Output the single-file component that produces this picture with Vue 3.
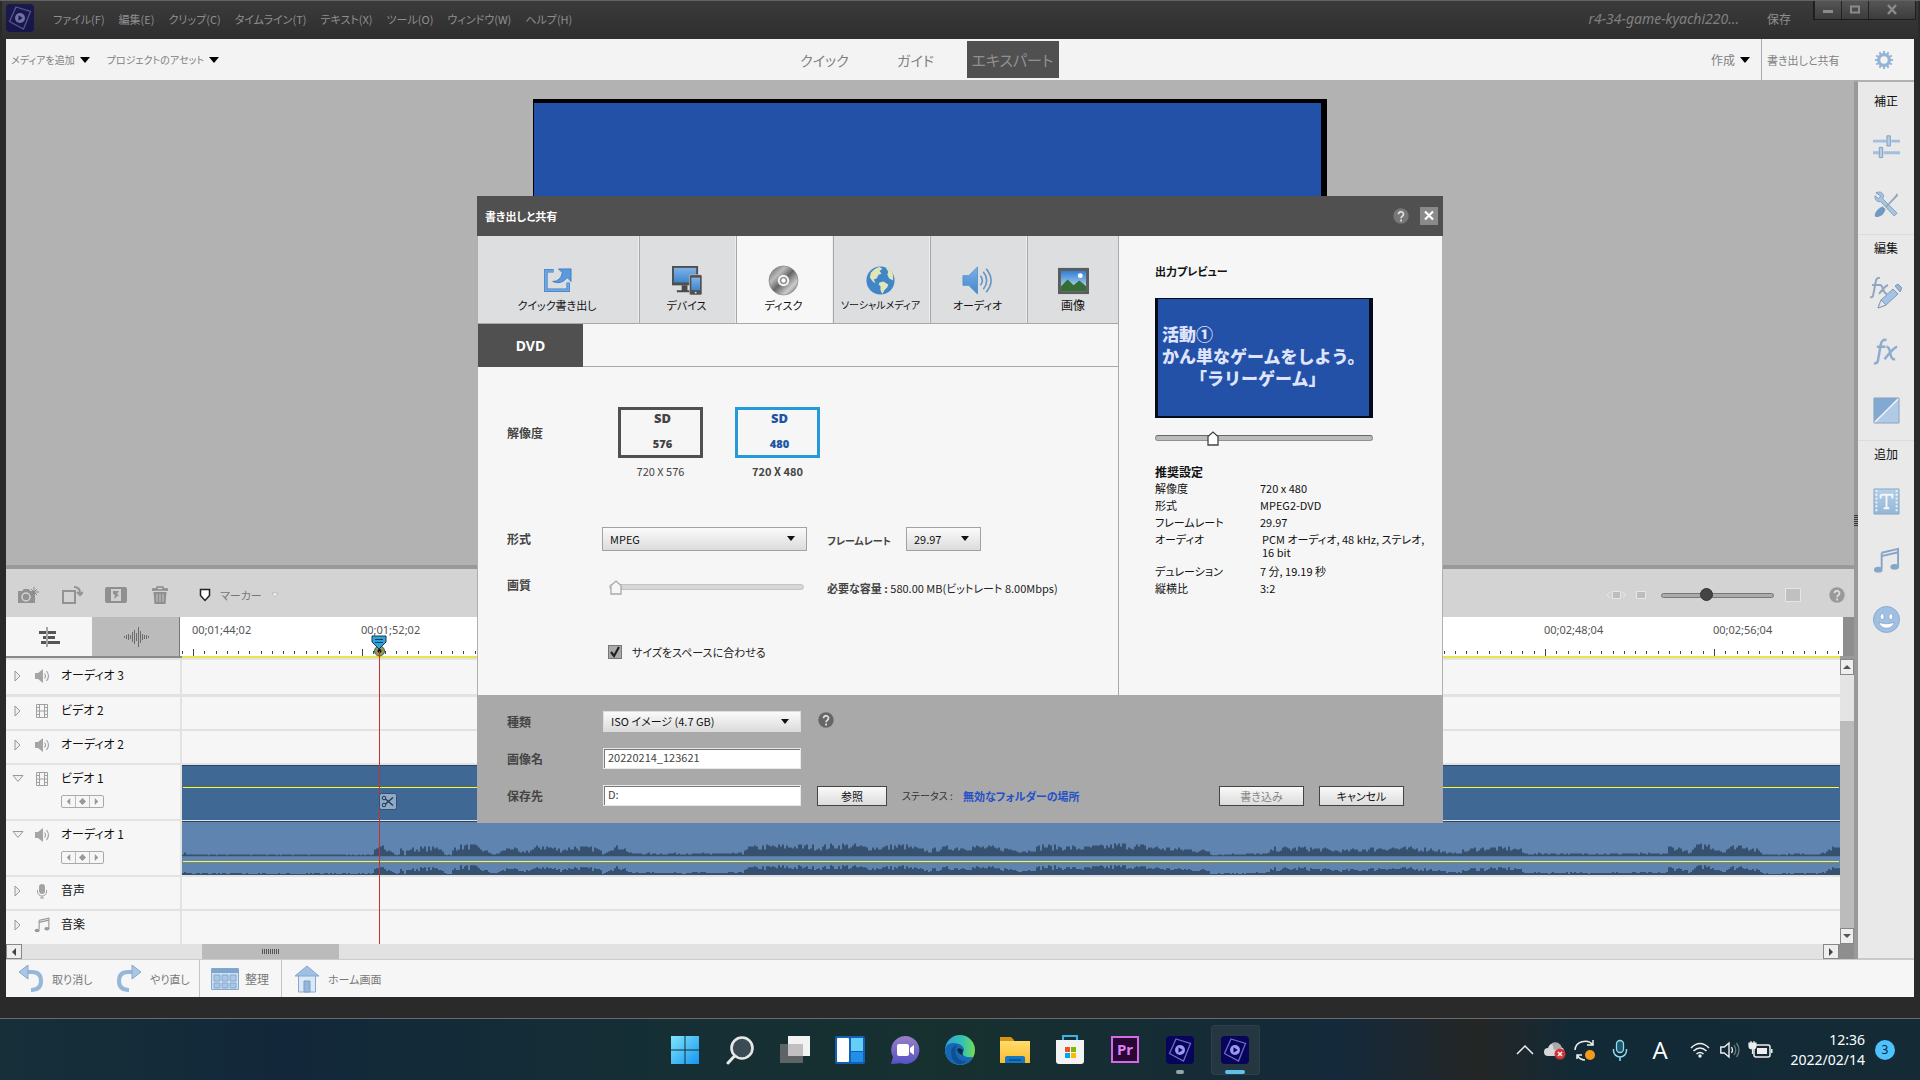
<script setup>
import { ref } from 'vue'

const menus = ['ファイル(F)', '編集(E)', 'クリップ(C)', 'タイムライン(T)', 'テキスト(X)', 'ツール(O)', 'ウィンドウ(W)', 'ヘルプ(H)']

const tabs = [
  { id: 'quick', label: 'クイック書き出し' },
  { id: 'device', label: 'デバイス' },
  { id: 'disc', label: 'ディスク' },
  { id: 'social', label: 'ソーシャルメディア' },
  { id: 'audio', label: 'オーディオ' },
  { id: 'image', label: '画像' }
]
const activeTab = ref('disc')

const format = ref('MPEG')
const rate = ref('29.97')
const kind = ref('ISO イメージ (4.7 GB)')
const quality = ref(0)
const position = ref(25)
const zoom = ref(39)
const fit = ref(true)
const imageName = ref('20220214_123621')
const folder = ref('D:')

const settings = [
  ['解像度', '720 x 480'],
  ['形式', 'MPEG2-DVD'],
  ['フレームレート', '29.97'],
  ['オーディオ', 'PCM オーディオ, 48 kHz, ステレオ, 16 bit'],
  ['デュレーション', '7 分, 19.19 秒'],
  ['縦横比', '3:2']
]

const timecodes = ['00;01;44;02', '00;01;52;02', '00;02;00;04', '00;02;08;04', '00;02;16;04', '00;02;24;04', '00;02;32;04', '00;02;40;04', '00;02;48;04', '00;02;56;04']

const tracks = [
  { name: 'オーディオ 3', icon: 'i-speaker', cls: 'first' },
  { name: 'ビデオ 2', icon: 'i-film' },
  { name: 'オーディオ 2', icon: 'i-speaker' },
  { name: 'ビデオ 1', icon: 'i-film', open: true, clip: 'video' },
  { name: 'オーディオ 1', icon: 'i-speaker', open: true, clip: 'audio' },
  { name: '音声', icon: 'i-mic' },
  { name: '音楽', icon: 'i-note', cls: 'last' }
]

const STEP = 169
const ticks = (() => {
  let d = ''
  for (let i = -1; i < 149; i++) {
    const x = Math.round(13 + (i * STEP) / 15)
    d += i % 15 === 0 ? `M${x} 32h1v7h-1z` : `M${x} 34h1v3h-1z`
  }
  return d
})()

// [x, loudness] pairs along the clip
const envelope = [
  [0, 4], [10, 2], [190, 2], [191, 6], [200, 10], [210, 7], [212, 2], [217, 2], [218, 9], [222, 2], [226, 8], [259, 9], [262, 2], [269, 1], [271, 10], [290, 11], [302, 6], [312, 2],
  [328, 10], [338, 4], [360, 11], [378, 7], [390, 10], [415, 8], [420, 3], [428, 9], [440, 10], [448, 3], [560, 3], [562, 9], [600, 11], [640, 10], [660, 12], [690, 9], [720, 11],
  [745, 6], [760, 9], [800, 10], [845, 6], [860, 11], [900, 9], [940, 12], [990, 8], [1026, 6], [1028, 2], [1085, 3], [1090, 8], [1120, 9], [1160, 6], [1200, 9], [1230, 8], [1248, 8],
  [1270, 3], [1290, 8], [1310, 9], [1336, 8], [1342, 3], [1484, 3], [1486, 10], [1500, 8], [1508, 3], [1512, 10], [1525, 12], [1540, 5], [1545, 9], [1560, 12], [1575, 6], [1582, 2],
  [1640, 3], [1648, 9], [1656, 8], [1658, 4]
]
const loudness = x => {
  let i = 0
  while (i < envelope.length - 2 && envelope[i + 1][0] < x) i++
  const [x0, y0] = envelope[i]
  const [x1, y1] = envelope[i + 1]
  return y0 + ((y1 - y0) * (x - x0)) / (x1 - x0)
}
const wave = (base, gain) => {
  let seed = 7
  let d = `M0 ${base}`
  for (let x = 0; x < 1658; x += 2) {
    seed = (seed * 16807) % 2147483647
    const n = 0.6 + 0.6 * (seed / 2147483647)
    d += `V${base - Math.max(1, Math.round(loudness(x) * n * gain))}h2`
  }
  return d + `V${base}z`
}
const wavePath = wave(35, 1) + wave(54, 0.8)

const gearTeeth = Array.from({ length: 12 }, (_, i) => i * 30)
</script>

<template>
  <div class="desktop">
    <svg class="defs" aria-hidden="true">
      <defs>
        <linearGradient id="gBlue" x1="0" y1="0" x2="0" y2="1"><stop offset="0" stop-color="#7fb2e6" /><stop offset="1" stop-color="#3f86cf" /></linearGradient>
        <linearGradient id="gPale" x1="0" y1="0" x2="0" y2="1"><stop offset="0" stop-color="#b4cfe9" /><stop offset="1" stop-color="#93b6d8" /></linearGradient>
        <linearGradient id="gDisc" x1="0" y1="0" x2="1" y2="1"><stop offset="0" stop-color="#555" /><stop offset=".3" stop-color="#bbb" /><stop offset=".5" stop-color="#666" /><stop offset=".75" stop-color="#ccc" /><stop offset="1" stop-color="#555" /></linearGradient>
        <linearGradient id="gSky" x1="0" y1="0" x2="0" y2="1"><stop offset="0" stop-color="#2f7fd0" /><stop offset="1" stop-color="#cfe6f6" /></linearGradient>
        <linearGradient id="gWin" x1="0" y1="0" x2="1" y2="1"><stop offset="0" stop-color="#7ee6fb" /><stop offset="1" stop-color="#1795f0" /></linearGradient>
        <linearGradient id="gChat" x1="0" y1="0" x2="0" y2="1"><stop offset="0" stop-color="#9a7fc6" /><stop offset="1" stop-color="#5453c4" /></linearGradient>
        <linearGradient id="gEdge" x1="0" y1="0" x2="1" y2="0"><stop offset="0" stop-color="#2da3dd" /><stop offset=".6" stop-color="#35c3b0" /><stop offset="1" stop-color="#74dc55" /></linearGradient>
        <linearGradient id="gFold" x1="0" y1="0" x2="0" y2="1"><stop offset="0" stop-color="#ffdb6e" /><stop offset="1" stop-color="#fbbd2c" /></linearGradient>
        <symbol id="i-pe" viewBox="0 0 28 28">
          <rect width="28" height="28" rx="4" fill="#06055a" />
          <path d="M10 3 24.500 7.500 17.500 25 3.500 17.500z" fill="none" stroke="#6f6ac8" stroke-width="1.300" />
          <circle cx="14" cy="14" r="5" fill="#9c99f5" />
          <path d="M12.500 11.200v5.600l4.200-2.800z" fill="#06055a" />
        </symbol>
        <symbol id="i-help" viewBox="0 0 16 16">
          <circle cx="8" cy="8" r="7.700" fill="currentColor" />
          <path d="M5.500 6.200a2.500 2.400 0 1 1 3.800 2C8.300 8.800 8.100 9.200 8.100 10.200M8.100 11.600v1.800" fill="none" stroke="#ddd" stroke-width="1.800" />
        </symbol>
        <symbol id="i-speaker" viewBox="0 0 16 16">
          <path d="M1 5h3l5-4v14l-5-4H1z" fill="#a5a5a5" />
          <path d="M10.500 5.500q2 2.500 0 5M12.500 3q4 5 0 10" fill="none" stroke="#a5a5a5" stroke-width="1.200" />
        </symbol>
        <symbol id="i-film" viewBox="0 0 16 16">
          <path d="M2.500 1.500h11v13h-11zM5.500 1.500v13M10.500 1.500v13M5.500 8h5M2.500 4.500h3M2.500 8h3M2.500 11.500h3M10.500 4.500h3M10.500 8h3M10.500 11.500h3" fill="none" stroke="#a0a0a0" />
        </symbol>
        <symbol id="i-mic" viewBox="0 0 16 16">
          <rect x="5" y="1" width="6" height="10" rx="3" fill="#a3a3a3" />
          <path d="M3.500 7v2a4.500 4 0 0 0 9 0V7M8 13v2M6 15h4" fill="none" stroke="#a3a3a3" />
        </symbol>
        <symbol id="i-note" viewBox="0 0 28 28">
          <path d="M9 6 26 2v19M9 22V6M9 9.500 26 5.500" fill="none" stroke="currentColor" stroke-width="2" />
          <ellipse cx="5.500" cy="23.500" rx="4.500" ry="3" fill="currentColor" />
          <ellipse cx="22.500" cy="20.500" rx="4.500" ry="3" fill="currentColor" />
        </symbol>
      </defs>
    </svg>

    <div class="app">
      <header class="titlebar">
        <svg class="logo" viewBox="0 0 28 28"><use href="#i-pe" /></svg>
        <nav class="menus"><button v-for="m in menus" :key="m">{{ m }}</button></nav>
        <i class="filename">r4-34-game-kyachi220...</i>
        <button class="save">保存</button>
        <div class="winbtns">
          <button aria-label="最小化"><svg viewBox="0 0 12 12"><path d="M1 6h10v3H1z" fill="#8a8a8a" /></svg></button>
          <button aria-label="最大化"><svg viewBox="0 0 12 12"><path d="M2 2.500h8v6H2z" fill="none" stroke="#8a8a8a" stroke-width="2" /></svg></button>
          <button class="x" aria-label="閉じる"><svg viewBox="0 0 12 12"><path d="M2 1l8 9M10 1l-8 9" stroke="#8a8a8a" stroke-width="2.400" /></svg></button>
        </div>
      </header>

      <div class="toolbar">
        <div class="side">
          <button>メディアを追加<b class="arrow"></b></button>
          <button>プロジェクトのアセット<b class="arrow"></b></button>
        </div>
        <div class="modes">
          <button>クイック</button><button>ガイド</button><button class="on">エキスパート</button>
        </div>
        <div class="side right">
          <button class="create">作成<b class="arrow"></b></button>
          <button class="share">書き出しと共有</button>
          <button class="gear" aria-label="設定">
            <svg viewBox="0 0 20 20"><rect v-for="a in gearTeeth" :key="a" x="9" y="1" width="2" height="4" fill="#94b3d6" :transform="`rotate(${a} 10 10)`" /><circle cx="10" cy="10" r="5.300" fill="none" stroke="#94b3d6" stroke-width="3.200" /></svg>
          </button>
        </div>
      </div>

      <div class="workspace">
        <main class="main">
          <section class="monitor"><div class="screen"></div></section>

          <section class="timeline">
            <div class="tlbar">
              <button aria-label="フレームを保存"><svg viewBox="0 0 22 18"><path d="M1 5h4l2-2h5l1 2h5v12H1z" fill="#929292" /><circle cx="9" cy="11" r="4" fill="none" stroke="#d3d3d3" stroke-width="1.500" /><path d="M17 1v10M12 6h10M14 3l6 6M20 3l-6 6" stroke="#8a8a8a" /></svg></button>
              <button aria-label="回転"><svg viewBox="0 0 22 18"><path d="M2 5h12v12H2z" fill="none" stroke="#929292" stroke-width="2" /><path d="M13 1q6 0 6 6M16 6l3 3 3-3" fill="none" stroke="#929292" stroke-width="2" /></svg></button>
              <button aria-label="モーション"><svg viewBox="0 0 22 18"><rect y="1" width="22" height="16" rx="2" fill="#8f8f8f" /><path d="M6 3h10v12H6z" fill="#d0d0d0" /><path d="M8 5h6l-2 3 2 1-5 4 1-4-2-1z" fill="#929292" /></svg></button>
              <button aria-label="削除"><svg viewBox="0 0 22 18"><path d="M3 3h5V1h6v2h5M3 4h16" fill="none" stroke="#8b8b8b" stroke-width="1.500" /><path d="M4.500 6h13l-1 12h-11z" fill="#8f8f8f" /><path d="M8 8v8M11 8v8M14 8v8" stroke="#c5c5c5" /></svg></button>
              <button class="marker"><svg viewBox="0 0 12 14"><path d="M1.500 1.500h9v6L6 12.500 1.500 7.500z" fill="#fff" stroke="#222" stroke-width="1.500" /></svg>マーカー<svg class="chev" viewBox="0 0 8 8"><path d="M1 2h6L4 6z" fill="#f4f4f4" stroke="#aaa" stroke-width=".6" /></svg></button>
              <span class="grow"></span>
              <svg class="z1" viewBox="0 0 20 10"><path d="M6.500 1.500h8v7h-8z" fill="#bdbdbd" stroke="#e6e6e6" /><path d="M4 2 1 5l3 3M16.500 2l3 3-3 3" fill="none" stroke="#e6e6e6" /></svg>
              <svg class="z2" viewBox="0 0 10 10"><path d="M.5 1.500h9v7h-9z" fill="#bdbdbd" stroke="#e6e6e6" /></svg>
              <input v-model="zoom" class="zoom" type="range" aria-label="ズーム">
              <svg class="z3" viewBox="0 0 16 14"><path d="M.5.500h15v13H.5z" fill="#c0c0c0" stroke="#e6e6e6" /></svg>
              <button class="helpbtn" aria-label="ヘルプ"><svg viewBox="0 0 16 16"><use href="#i-help" /></svg></button>
            </div>

            <div class="rulerrow">
              <div class="views">
                <button class="on" aria-label="タイムライン"><svg viewBox="0 0 22 20"><path d="M1 4h7v3H1zM10 4h8v3h-8zM5 9h3v3H5zM10 9h7v3h-7zM3 14h5v3H3zM10 14h12v3H10z" fill="#555" /><path d="M9 0v20" stroke="#555" /></svg></button>
                <button aria-label="オーディオ"><svg viewBox="0 0 26 20"><path d="M1.500 9v2M3.500 8v4M5.500 7v6M7.500 8v4M9.500 5v10M11.500 3v14M13.500 6v8M15.500 0v20M17.500 4v12M19.500 7v6M21.500 8v4M23.500 8v4M25.500 9v2" stroke="#6b6b6b" /></svg></button>
              </div>
              <div class="ruler">
                <span v-for="t in timecodes" :key="t">{{ t }}</span>
                <svg class="ticks"><path :d="ticks" fill="#444" /></svg>
              </div>
              <i class="corner"></i>
            </div>

            <div class="tracks">
              <div class="rows">
                <div v-for="t in tracks" :key="t.name" class="track" :class="[t.cls, { open: t.open }]">
                  <div class="thead">
                    <svg class="tri" viewBox="0 0 12 12"><path :d="t.open ? 'M1 2.500h10l-5 6z' : 'M3 1v10l5-5z'" fill="#eee" stroke="#999" /></svg>
                    <svg class="ticon" viewBox="0 0 16 16"><use :href="'#' + t.icon" /></svg>
                    <div class="tname">
                      <span>{{ t.name }}</span>
                      <span v-if="t.open" class="keys">
                        <button aria-label="前へ"><svg viewBox="0 0 8 8"><path d="M6 0v8L2 4z" fill="#999" /></svg></button>
                        <button aria-label="追加"><svg viewBox="0 0 8 8"><path d="M4 0l4 4-4 4-4-4z" fill="#999" /></svg></button>
                        <button aria-label="次へ"><svg viewBox="0 0 8 8"><path d="M2 0v8l4-4z" fill="#999" /></svg></button>
                      </span>
                    </div>
                  </div>
                  <div class="lane" :class="t.clip">
                    <svg v-if="t.clip === 'audio'" class="wave" viewBox="0 0 1658 54" preserveAspectRatio="none"><path :d="wavePath" fill="#36506f" /></svg>
                    <i v-if="t.clip" class="level"></i>
                  </div>
                </div>
                <div class="playhead">
                  <svg viewBox="0 0 16 22">
                    <circle cx="8.500" cy="16" r="5" fill="#8d9c5c" stroke="#4a5a3a" /><circle cx="8.500" cy="16" r="2" fill="#111" />
                    <path d="M1 1h14v6L8 14 1 7z" fill="#2ea3dc" stroke="#173a52" /><path d="M4 4.500h8M4 7.500h8" stroke="#173a52" />
                  </svg>
                  <i></i>
                </div>
                <svg class="scissors" viewBox="0 0 18 17"><rect x=".5" y=".5" width="17" height="16" rx="2" fill="#8fa9c8" stroke="#36506f" /><circle cx="5" cy="5" r="1.800" fill="none" stroke="#22364f" /><circle cx="5" cy="12" r="1.800" fill="none" stroke="#22364f" /><path d="M6.500 6 14 12.500M6.500 11 14 4.500" stroke="#22364f" stroke-width="1.300" /></svg>
              </div>
              <div class="vscroll">
                <button aria-label="上へ"><svg viewBox="0 0 8 8"><path d="M0 6h8L4 2z" fill="#555" /></svg></button>
                <i></i>
                <button aria-label="下へ"><svg viewBox="0 0 8 8"><path d="M0 2h8L4 6z" fill="#555" /></svg></button>
              </div>
            </div>
            <div class="hscroll">
              <button aria-label="左へ"><svg viewBox="0 0 8 8"><path d="M6 0v8L2 4z" fill="#444" /></svg></button>
              <i></i>
              <button class="end" aria-label="右へ"><svg viewBox="0 0 8 8"><path d="M2 0v8l4-4z" fill="#444" /></svg></button>
            </div>
          </section>
        </main>
        <div class="divider"><i></i></div>

        <aside class="sidebar">
          <section>
            <h2>補正</h2>
            <button aria-label="調整"><svg viewBox="0 0 28 28"><path d="M0 8h14v3H0zM19 8h9v3h-9zM0 20h6v3H0zM11 20h17v3H11z" fill="#a3bfdd" /><path d="M14.500 4h3.500v10.500h-3.500zM6.500 16h3.500v10.500H6.500z" fill="#b4cfe9" stroke="#7f9dc0" /></svg></button>
            <button aria-label="ツール"><svg viewBox="0 0 28 28"><path d="M3 2q6-3 8 3l-1 3 15 15-3 3L8 11q-6 1-6-6l4 3 2-3z" fill="#a7c4e1" stroke="#7f9dc0" /><path d="M25 2l1 3-12 12-1-1L23 5z" fill="#93a6bb" /><path d="M10 16l3 3q-2 7-8 8-4 0-3-3 2-6 8-8z" fill="#7099c4" /></svg></button>
          </section>
          <section>
            <h2>編集</h2>
            <button aria-label="エフェクトの編集"><svg class="big" viewBox="0 0 32 32"><path d="M10 1q-4-1-4.500 5L3 19q-1 2-3 1M2 8h8M10 8q2 0 3 4t4 5M18 8q-3 1-9 9" fill="none" stroke="#93a6c0" stroke-width="2" /><path d="M23 12l5 5-12 11-8 3 3-8z" fill="#a3c3e4" stroke="#8499b0" /><path d="M8 31l3-8 5 5z" fill="#e6e6ea" stroke="#8499b0" /><path d="M25 9l3-2 4 4-2 4z" fill="#92b6dc" stroke="#8499b0" /></svg></button>
            <button aria-label="エフェクト"><svg viewBox="0 0 28 28"><path d="M14 2q-5-1-6 5L5 24q-1 3-4 2M4 9h9M14 9q3 0 4 7t5 6M25 9q-4 1-13 13" fill="none" stroke="#8facd0" stroke-width="2.600" /></svg></button>
            <button aria-label="トランジション"><svg viewBox="0 0 28 28"><path d="M1 1h26L1 27z" fill="#82a9d2" /><path d="M27 1v26H1z" fill="#b0cbe8" /><path d="M1 27 27 1" stroke="#f4f4f4" stroke-width="1.500" /><path d="M1 1h26v26H1z" fill="none" stroke="#8aa2bd" /></svg></button>
          </section>
          <section>
            <h2>追加</h2>
            <button aria-label="タイトル"><svg viewBox="0 0 28 28"><path d="M1 1h26v26H1z" fill="url(#gPale)" stroke="#8aa8c8" /><path d="M8 7h12v4M8 11V7M14 7v14M11 21h6" fill="none" stroke="#f4f6f8" stroke-width="2" /><path d="M3.500 2v24M24.500 2v24" stroke="#f0f4f8" stroke-width="2" stroke-dasharray="2 2" /></svg></button>
            <button class="note" aria-label="音楽"><svg viewBox="0 0 28 28"><use href="#i-note" /></svg></button>
            <button aria-label="グラフィック"><svg viewBox="0 0 28 28"><circle cx="14" cy="14" r="13.500" fill="#9fc0e4" stroke="#8aa8cc" /><ellipse cx="9.500" cy="11" rx="2" ry="3" fill="#fff" stroke="#7f9dc0" stroke-width=".7" /><ellipse cx="18.500" cy="11" rx="2" ry="3" fill="#fff" stroke="#7f9dc0" stroke-width=".7" /><path d="M6 17q8 3 16 0-2 6-8 6t-8-6z" fill="#fff" stroke="#7f9dc0" stroke-width=".7" /></svg></button>
          </section>
        </aside>
      </div>

      <footer class="bottombar">
        <button class="undo"><svg viewBox="0 0 26 28"><path d="M9 7h5q9 0 9 9 0 9-10 9" fill="none" stroke="#97b7da" stroke-width="4" /><path d="M10 0v14L1 7z" fill="#a9c6e5" stroke="#8ba8c8" /></svg>取り消し</button>
        <button class="redo"><svg viewBox="0 0 26 28"><path d="M17 7h-5q-9 0-9 9 0 9 10 9" fill="none" stroke="#97b7da" stroke-width="4" /><path d="M16 0v14l9-7z" fill="#a9c6e5" stroke="#8ba8c8" /></svg>やり直し</button>
        <button class="tidy"><svg class="cal" viewBox="0 0 28 24"><path d="M.5 1.500h27v21H.5z" fill="#cfe0f0" stroke="#86a8cc" /><path d="M1 2h26v4H1z" fill="#7da4cd" /><path d="M3 8h6v6H3zM11 8h6v6h-6zM19 8h6v6h-6zM3 16h6v5H3zM11 16h6v5h-6zM19 16h6v5h-6z" fill="#a9c8e8" stroke="#86a8cc" /></svg>整理</button>
        <button class="home"><svg viewBox="0 0 26 28"><path d="M4.500 10h17v17h-17z" fill="#dbe8f5" stroke="#86a8cc" /><path d="M13 1 25 11H1z" fill="#9fc0e4" stroke="#86a8cc" /><path d="M10 16h6v11h-6z" fill="#93b6dc" stroke="#7f9dc0" /></svg>ホーム画面</button>
      </footer>

      <section class="dialog" role="dialog" aria-label="書き出しと共有">
        <header>
          <h1>書き出しと共有</h1>
          <button class="dhelp" aria-label="ヘルプ"><svg viewBox="0 0 16 16"><use href="#i-help" /></svg></button>
          <button class="dclose" aria-label="閉じる"><svg viewBox="0 0 18 18"><path d="M5 4.500l8 8M13 4.500l-8 8" stroke="#fff" stroke-width="2.200" /></svg></button>
        </header>

        <div class="dbody">
          <div class="left">
            <nav class="tabs">
              <button v-for="t in tabs" :key="t.id" :class="[t.id, { on: t.id === activeTab }]" @click="activeTab = t.id">
                <svg v-if="t.id === 'quick'" viewBox="0 0 32 32"><path d="M12 6H4v20h23v-8" fill="none" stroke="#3f7fc4" stroke-width="3.600" /><path d="M12 6H4v20h23v-8" fill="none" stroke="#6ea9e4" stroke-width="2" /><path d="M17 4h13v13l-4-4q-6 8-15 4 8 0 10-9z" fill="#5b9ade" stroke="#3873b5" stroke-width=".8" /></svg>
                <svg v-else-if="t.id === 'device'" viewBox="0 0 32 32"><path d="M1 1h27v20H1z" fill="#505050" /><path d="M3 3h23v15H3z" fill="url(#gBlue)" /><path d="M11 21h6v5h3v2H6v-2h5z" fill="#4a4a4a" /><rect x="19" y="10" width="13" height="21" rx="1.500" fill="#505050" stroke="#ddd" stroke-width=".6" /><path d="M21 13h9v13h-9z" fill="url(#gBlue)" /><circle cx="25.500" cy="28.500" r="1" fill="#ddd" /></svg>
                <svg v-else-if="t.id === 'disc'" viewBox="0 0 32 32"><circle cx="16" cy="16" r="15" fill="url(#gDisc)" stroke="#777" stroke-width=".6" /><circle cx="16" cy="16" r="6" fill="#f0f0f0" /><circle cx="16" cy="16" r="3" fill="#fff" stroke="#888" stroke-width="1.400" /></svg>
                <svg v-else-if="t.id === 'social'" viewBox="0 0 32 32"><circle cx="16" cy="16" r="14.500" fill="#4184c8" /><path d="M6 8q4-5 9-6l3 2-3 2 2 3-3 1-2 4-3 1 2 4-3-2-3-4zM15 18l4-1 5 3-1 3-3 3-2 4-2-4 0-4-2-2zM21 2q6 2 8 8l0 6-4-2-2-4 1-3z" fill="#dfe7b8" /></svg>
                <svg v-else-if="t.id === 'audio'" viewBox="0 0 32 32"><path d="M1 11h6L16 2v28L7 21H1z" fill="url(#gBlue)" stroke="#4c8bcb" stroke-width=".8" /><path d="M19 11q4 5 0 10M22 7q7 9 0 18M25 4q10 12 0 24" fill="none" stroke="#6c96c2" stroke-width="1.700" /></svg>
                <svg v-else viewBox="0 0 32 32"><path d="M0 3h32v27H0z" fill="#5c5c5c" /><path d="M3 6h26v21H3z" fill="url(#gSky)" /><path d="M3 22l7-7 6 6 6-5 7 6v5H3z" fill="#356d35" /><circle cx="23" cy="11" r="2.500" fill="#fff" /></svg>
                <span>{{ t.label }}</span>
              </button>
            </nav>
            <div class="subtabs"><button>DVD</button></div>

            <div class="form">
              <div class="row res">
                <span class="lab">解像度</span>
                <div class="opts">
                  <button class="opt"><span class="box"><b>SD</b><b class="n">576</b></span><span class="cap">720 X 576</span></button>
                  <button class="opt sel"><span class="box"><b>SD</b><b class="n">480</b></span><span class="cap">720 X 480</span></button>
                </div>
              </div>
              <div class="row fmt">
                <label class="lab" for="format">形式</label>
                <select id="format" v-model="format" class="wide"><option>MPEG</option></select>
                <label class="lab2" for="rate">フレームレート</label>
                <select id="rate" v-model="rate" class="slim"><option>29.97</option></select>
              </div>
              <div class="row qual">
                <label class="lab" for="quality">画質</label>
                <input id="quality" v-model="quality" class="house faint" type="range">
                <span class="need"><b>必要な容量 :</b> 580.00 MB(ビットレート 8.00Mbps)</span>
              </div>
              <div class="row check">
                <input id="fit" v-model="fit" type="checkbox"><label for="fit">サイズをスペースに合わせる</label>
              </div>
            </div>
          </div>

          <div class="rightcol">
            <h2>出力プレビュー</h2>
            <div class="preview"><p>活動①</p><p>かん単なゲームをしよう。</p><p class="in">「ラリーゲーム」</p></div>
            <input v-model="position" class="house" type="range" aria-label="再生位置">
            <h2 class="rec">推奨設定</h2>
            <dl>
              <template v-for="s in settings" :key="s[0]">
                <dt>{{ s[0] }}</dt><dd :class="{ two: s[0] === 'オーディオ' }">{{ s[1] }}</dd>
              </template>
            </dl>
          </div>
        </div>

        <div class="dfoot">
          <div class="frow">
            <label class="lab" for="kind">種類</label>
            <select id="kind" v-model="kind"><option>ISO イメージ (4.7 GB)</option></select>
            <button class="fhelp" aria-label="ヘルプ"><svg viewBox="0 0 16 16"><use href="#i-help" /></svg></button>
          </div>
          <div class="frow">
            <label class="lab" for="iname">画像名</label>
            <input id="iname" v-model="imageName" type="text">
          </div>
          <div class="frow">
            <label class="lab" for="folder">保存先</label>
            <input id="folder" v-model="folder" type="text">
            <button class="btn browse">参照</button>
            <span class="status">ステータス :</span><b class="bad">無効なフォルダーの場所</b>
            <button class="btn burn" disabled>書き込み</button>
            <button class="btn">キャンセル</button>
          </div>
        </div>
      </section>
    </div>

    <footer class="taskbar">
      <span class="pad"></span>
      <nav class="dock">
        <button aria-label="スタート"><svg viewBox="0 0 30 30"><path d="M1 1h13.500v13.500H1zM15.500 1H29v13.500H15.500zM1 15.500h13.500V29H1zM15.500 15.500H29V29H15.500z" fill="url(#gWin)" /></svg></button>
        <button aria-label="検索"><svg viewBox="0 0 30 30"><circle cx="17" cy="13" r="10.500" fill="#3b4c55" stroke="#e8e8e8" stroke-width="2.600" /><path d="M9.500 21 3 28" stroke="#e8e8e8" stroke-width="3" stroke-linecap="round" /></svg></button>
        <button aria-label="タスクビュー"><svg viewBox="0 0 30 30"><path d="M8 1h22v20H8z" fill="#f2f2f2" /><path d="M0 9h23v19H0z" fill="#777" fill-opacity=".75" /><path d="M8 9h15v12H8z" fill="#c0c0c0" /></svg></button>
        <button aria-label="ウィジェット"><svg viewBox="0 0 30 30"><rect y="1" width="30" height="28" rx="2" fill="#1261b4" /><rect x="2" y="3" width="12" height="24" rx="1" fill="#fff" /><path d="M16 3h12v13H16z" fill="#66cdf8" /><path d="M16 17h12v10H16z" fill="#1f8fe8" /></svg></button>
        <button aria-label="チャット"><svg viewBox="0 0 30 30"><path d="M15 1a14 14 0 1 1-4 27.300L1 29l2-7A14 14 0 0 1 15 1z" fill="url(#gChat)" /><rect x="7" y="9" width="12" height="12" rx="2" fill="#fff" /><path d="M20 13l4-3v10l-4-3z" fill="#fff" /></svg></button>
        <button aria-label="Edge"><svg viewBox="0 0 30 30"><circle cx="15" cy="15" r="15" fill="url(#gEdge)" /><path d="M0 15Q1 8 8 8q9 0 11 6 0 3-2 4 1 5 11 4-4 8-13 8Q1 29 0 15z" fill="#1667b5" /><path d="M6 16q1-5 6-6-3 5-1 10 3 7 11 6-4 4-9 3Q6 26 6 16z" fill="#0f4f94" /><path d="M12 14q3-2 6 1-1 3 0 5h7l-7 0q-5-1-6-6z" fill="#132a35" /></svg></button>
        <button aria-label="エクスプローラー"><svg viewBox="0 0 30 30"><path d="M0 2h11l3 3v4H0z" fill="#d9940f" /><path d="M0 6h30v22H0z" fill="url(#gFold)" /><path d="M5 28v-5q0-2 2-2h16q2 0 2 2v5z" fill="#1477c4" /><path d="M9 25h12" stroke="#0b4d8a" stroke-width="1.500" /></svg></button>
        <button aria-label="ストア"><svg viewBox="0 0 30 30"><path d="M8 6V1h14v5" fill="none" stroke="#39b3ea" stroke-width="2" /><path d="M1 5h28v21q0 3-3 3H4q-3 0-3-3z" fill="#f3f3f3" /><path d="M10 12h5v5h-5z" fill="#f05022" /><path d="M16 12h5v5h-5z" fill="#7fba00" /><path d="M10 18h5v5h-5z" fill="#00a4ef" /><path d="M16 18h5v5h-5z" fill="#ffb900" /></svg></button>
        <button aria-label="Premiere Pro"><span class="pr">Pr</span></button>
        <button class="run" aria-label="Premiere Elements"><svg viewBox="0 0 28 28"><use href="#i-pe" /></svg></button>
        <button class="run cur" aria-label="Premiere Elements エディター"><svg viewBox="0 0 28 28"><use href="#i-pe" /></svg></button>
      </nav>
      <div class="tray">
        <svg class="w30" viewBox="0 0 30 24"><path d="M7 16l8-8 8 8" fill="none" stroke="#eee" stroke-width="1.500" /></svg>
        <svg class="w30" viewBox="0 0 30 24"><path d="M8 18a4 4 0 0 1 0-8 7 7 0 0 1 13-1 5 5 0 0 1 1 9z" fill="#d8d8d8" /><path d="M12 5a7 7 0 0 1 10 5l-8 2z" fill="#a9a9a9" /><circle cx="20" cy="16" r="5.500" fill="#d13438" /><path d="M18 14l4 4M22 14l-4 4" stroke="#fff" stroke-width="1.400" /></svg>
        <svg class="w30" viewBox="0 0 30 24"><path d="M5 12a10 9 0 0 1 18-5M23 2v5h-6M7 21v-4h5M7 17q3 5 8 5" fill="none" stroke="#eee" stroke-width="1.500" /><circle cx="20" cy="17" r="5" fill="#f59b1c" /></svg>
        <svg class="w40" viewBox="0 0 40 24"><rect x="16.500" y="2.500" width="7" height="12" rx="3.500" fill="#24566b" stroke="#8fdcf0" stroke-width="1.300" /><path d="M13.500 11v1.500a6.500 6.500 0 0 0 13 0V11M20 19v4" fill="none" stroke="#8fdcf0" stroke-width="1.500" /></svg>
        <span class="ime">A</span>
        <svg class="w40" viewBox="0 0 40 24"><path d="M11 10q9-9 18 0M13.500 13q6.500-6 13 0M16.500 16q3.500-3 7 0" fill="none" stroke="#eee" stroke-width="1.600" /><circle cx="20" cy="18" r="1.700" fill="#eee" /></svg>
        <svg class="w20" viewBox="0 0 20 24"><path d="M.8 9h3.500L9 5v14l-4.700-4H.8z" fill="none" stroke="#eee" stroke-width="1.400" /><path d="M11.500 9q2 3 0 6" fill="none" stroke="#eee" stroke-width="1.300" /><path d="M14 7q3.500 5 0 10M16.500 5q5 7 0 14" fill="none" stroke="#6b7a82" stroke-width="1.300" /></svg>
        <svg class="w40" viewBox="0 0 40 24"><rect x="14" y="7" width="16" height="12" rx="2" fill="none" stroke="#eee" stroke-width="1.500" /><path d="M17 10h10v6H17zM31 11h1.500v4H31z" fill="#eee" /><path d="M9 5h7v3q0 3-3.500 3T9 8zM11 3v3M14 3v3M12.500 11v5" fill="#eee" stroke="#eee" stroke-width="1.200" /></svg>
        <div class="clock"><span>12:36</span><span>2022/02/14</span></div>
        <span class="badge">3</span>
      </div>
    </footer>
  </div>
</template>

<style>
body { margin: 0; background: #152b36; }
</style>

<style scoped>
* { box-sizing: border-box; }
.desktop {
  min-height: 100vh; display: flex; flex-direction: column;
  font-family: "Noto Sans CJK JP", "Liberation Sans", sans-serif; font-size: 12px; line-height: 18px;
  font-feature-settings: "palt"; color: #111;
}
.defs { position: absolute; width: 0; height: 0; }
button { border: 0; background: none; padding: 0; margin: 0; font: inherit; font-feature-settings: inherit; color: inherit; white-space: nowrap; }
input, select { font: inherit; font-feature-settings: inherit; color: inherit; margin: 0; }
svg { display: block; flex: none; }
h1, h2, p, dl, dd { margin: 0; font-size: inherit; }

.app { position: relative; flex: 1; display: flex; flex-direction: column; background: #2a2a2a; padding: 0 6px 21px; border-top: 1px solid #636363; border-bottom: 1px solid #6a6a6a; }
.titlebar { height: 38px; flex: none; display: flex; align-items: center; background: linear-gradient(#3b3b3b, #2e2e2e); margin: 0 -4px; padding: 0 0 2px 4px; color: #8f8f8f; }
.logo { width: 28px; height: 28px; opacity: .6; margin-bottom: 2px; }
.menus { display: flex; gap: 14px; margin-left: 19px; font-size: 11px; }
.filename { margin-left: auto; font-family: "Noto Sans", "Noto Sans CJK JP", sans-serif; font-size: 14px; color: #808080; }
.save { margin-left: 28px; }
.winbtns { display: flex; align-self: flex-start; margin-left: 22px; height: 19px; margin-right: 2px; border: 1px solid #1c1c1c; border-top: 0; background: linear-gradient(#555, #3c3c3c); }
.winbtns button { width: 27px; display: grid; place-items: center; border-left: 1px solid #222; }
.winbtns .x { width: 47px; }
.winbtns svg { width: 12px; height: 12px; }

.toolbar { height: 41px; flex: none; display: flex; background: #f3f3f3; color: #808080; }
.side { flex: 1; display: flex; align-items: center; gap: 17px; padding-left: 5px; font-size: 10px; }
.side button { display: flex; align-items: center; gap: 5px; }
.right { justify-content: flex-end; gap: 0; padding: 0; align-items: stretch; font-size: 11px; }
.right .create { font-size: 12px; }
.arrow { border: 5px solid transparent; border-top: 6px solid #000; border-bottom: 0; }
.side .share { margin-left: 11px; padding-left: 5px; width: 104px; border-left: 1px solid #aaa; }
.side .gear { width: 49px; padding-left: 9px; }
.gear svg { width: 20px; height: 20px; }
.modes { display: flex; align-items: center; gap: 11px; font-size: 14px; line-height: 24px; padding-right: 82px; }
.modes button { height: 37px; width: 80px; }
.modes .on { width: 92px; background: #505050; color: #909090; font-size: 15px; }

.workspace { flex: 1; display: flex; }
.main { flex: 1; min-width: 0; display: flex; flex-direction: column; }
.monitor { flex: 1; min-height: 120px; background: #b2b2b2; padding-top: 19px; border-bottom: 4px solid #999; }
.screen { width: 43%; aspect-ratio: 16 / 9; margin: 0 auto; background: #2351a8; border: solid #000; border-width: 4px 6px 4px 1px; }
.divider { width: 4px; background: #999; border-top: 2px solid #aaa; display: flex; align-items: flex-start; }
.divider i { width: 4px; height: 12px; margin-top: 433px; background: repeating-linear-gradient(#333 0 1px, #999 1px 2px); }

.sidebar { width: 56px; background: #e9e9e9; border-top: 2px solid #b0b0b0; border-bottom: 1px solid #c8c8c8; text-align: center; }
.sidebar section { display: flex; flex-direction: column; align-items: center; border-bottom: 1px solid #dcdcdc; }
.sidebar section:last-child { border: 0; }
.sidebar h2 { font-weight: 400; line-height: 26px; height: 28px; }
.sidebar section:first-child { padding-top: 6px; }
.sidebar section:last-child h2 { height: 31px; }
.sidebar button { height: 59px; display: grid; place-items: center; }
.sidebar svg { width: 27px; height: 27px; }
.sidebar .big { width: 32px; height: 32px; }
.sidebar .note { color: #86a6c9; }

.tlbar { height: 48px; background: #d3d3d3; display: flex; align-items: center; padding: 4px 9px 0 11px; gap: 22px; }
.tlbar > button > svg { width: 22px; height: 18px; }
.tlbar .marker { display: flex; align-items: center; gap: 9px; color: #777; font-size: 11px; margin-left: 6px; }
.tlbar .marker svg { width: 12px; height: 14px; }
.tlbar .marker .chev { width: 8px; height: 8px; }
.grow { flex: 1; }
.z1 { width: 20px; height: 10px; margin-right: -12px; }
.z2 { width: 10px; height: 10px; margin-right: -7px; }
.z3 { width: 16px; height: 14px; margin: 0 6px 0 -11px; }
.tlbar .helpbtn svg { width: 16px; height: 16px; color: #999; }
input[type="range"] { appearance: none; background: transparent; }
.zoom { width: 113px; height: 14px; }
.zoom::-webkit-slider-runnable-track { height: 5px; border-radius: 3px; background: #aaa; border: 1px solid #777; }
.zoom::-webkit-slider-thumb { appearance: none; width: 13px; height: 13px; margin-top: -6px; border-radius: 50%; background: #444; border: 1px solid #333; }

.rulerrow { height: 39px; display: flex; background: #fff; }
.views { width: 174px; flex: none; display: flex; border-right: 1px solid #777; }
.views button { flex: 1; display: grid; place-items: center; background: #bbb; }
.views .on { flex: 0 0 86px; background: #f6f6f6; }
.views svg { width: 22px; height: 20px; }
.views button + button svg { width: 26px; }
.ruler { position: relative; flex: 1; overflow: hidden; display: flex; padding: 5px 0 0 12px; font-family: "Noto Sans", "Noto Sans CJK JP", sans-serif; font-size: 11px; color: #555; line-height: 16px; }
.ruler span { flex: 0 0 169px; }
.ticks { position: absolute; left: 0; top: 0; width: 100%; height: 39px; }
.corner { width: 11px; background: #8e8e8e; }

.tracks { display: flex; }
.rows { position: relative; flex: 1; min-width: 0; padding-top: 2px; background: linear-gradient(90deg, #8a8a8a 176px, #e8e450 0) top / 100% 2px no-repeat #e2e2e2; }
.track { display: flex; height: 34px; padding-bottom: 2px; gap: 2px; }
.track.first { height: 39px; padding-top: 2px; padding-bottom: 3px; }
.track.last { height: 33px; padding-bottom: 0; }
.track.open { height: 56px; }
.thead { width: 174px; flex: none; background: #f6f6f6; display: flex; padding: 4px 0 0 6px; }
.first .thead { padding-top: 6px; }
.tri { width: 12px; height: 12px; margin-top: 4px; }
.ticon { width: 16px; height: 16px; margin: 2px 11px 0 10px; color: #999; }
.tname { display: flex; flex-direction: column; gap: 6px; font-size: 12px; }
.keys { display: flex; width: 43px; height: 13px; border: 1px solid #aaa; border-radius: 2px; margin-top: 2px; }
.keys button { flex: 1; display: grid; place-items: center; border-left: 1px solid #bbb; }
.keys button:first-child { border-left: 0; }
.keys svg { width: 7px; height: 7px; }
.lane { position: relative; flex: 1; background: #f6f6f6; }
.lane.video { background: #3f6994; border-top: 1px solid #2c4663; margin-bottom: -1px; }
.lane.audio { background: #6084b0; border-top: 1px solid #2c4663; }
.wave { width: 100%; height: 53px; }
.level { position: absolute; left: 1px; right: 1px; top: 21px; height: 1px; background: #eef08a; box-shadow: 0 -1px #55732f; }
.audio .level { top: 39px; box-shadow: 0 1px #7f8f4a; }
.playhead { position: absolute; left: 365px; top: -21px; bottom: 0; width: 16px; display: flex; flex-direction: column; align-items: center; }
.playhead svg { width: 16px; height: 22px; }
.playhead i { flex: 1; width: 1px; margin-top: -6px; background: #c8302c; }
.scissors { position: absolute; left: 373px; top: 137px; width: 18px; height: 17px; }
.vscroll { width: 14px; display: flex; flex-direction: column; background: #e4e4e4; border-top: 3px solid #999; }
.vscroll button, .hscroll button { width: 14px; height: 16px; display: grid; place-items: center; background: #eee; border: 1px solid #888; }
.vscroll svg, .hscroll svg { width: 8px; height: 8px; }
.vscroll i { flex: 1; margin-top: 46px; background: #bbb; }
.hscroll { height: 15px; display: flex; background: #e2e2e2; border-right: 15px solid #8e8e8e; }
.hscroll button { width: 16px; height: 15px; }
.hscroll i { width: 137px; margin-left: 180px; background: repeating-linear-gradient(90deg, #555 0 1px, #bbb 1px 2px) center / 17px 5px no-repeat #bbb; }
.hscroll .end { margin-left: auto; }

.bottombar { height: 38px; flex: none; display: flex; background: #f6f6f6; border-top: 1px solid #ccc; color: #777; }
.bottombar button { display: flex; align-items: center; gap: 8px; }
.bottombar svg { width: 26px; height: 28px; }
.bottombar .cal { width: 28px; height: 24px; }
.undo { width: 98px; padding-left: 12px; font-size: 11px; }
.redo { width: 95px; padding-left: 12px; font-size: 11px; }
.bottombar .tidy { width: 83px; padding-left: 11px; gap: 6px; border: solid #c4c4c4; border-width: 0 1px; }
.home { padding-left: 12px; font-size: 11px; }

.dialog { position: absolute; top: 195px; left: 50%; width: 966px; transform: translateX(-50%); background: #f6f6f6; }
.dialog > header { height: 40px; background: #505050; color: #fff; display: flex; align-items: center; padding: 0 5px 0 8px; }
.dialog h1 { flex: 1; font-size: 11px; }
.dhelp svg { width: 16px; height: 16px; color: #777; }
.dclose { margin-left: 11px; background: #8a8a8a; }
.dclose svg { width: 18px; height: 18px; }
.dbody { display: flex; border: solid #b0b0b0; border-width: 0 1px; }
.left { width: 641px; border-right: 1px solid #aaa; }
.tabs { display: flex; height: 88px; border-bottom: 1px solid #a8a8a8; }
.tabs button { width: 97px; display: flex; flex-direction: column; align-items: center; justify-content: flex-end; padding: 0 3px 9px 0; background: #dddee0; border-right: 1px solid #a8a8a8; box-shadow: inset -1px 0 #eee; font-size: 11px; }
.tabs .quick { width: 162px; }
.tabs .image { flex: 1; padding-right: 0; border: 0; font-size: 12px; box-shadow: none; }
.tabs .on { background: #f7f7f7; }
.tabs .social { font-size: 10px; }
.tabs svg { width: 31px; height: 31px; }
.subtabs { height: 43px; border-bottom: 1px solid #a8a8a8; }
.subtabs button { width: 105px; height: 43px; background: #505050; color: #fff; font: bold 14px/20px "Noto Sans", sans-serif; }
.form { padding: 40px 0 31px 29px; color: #222; }
.row { display: flex; align-items: center; height: 24px; }
.lab { width: 95px; color: #444; font-weight: 700; flex: none; }
.res { height: 73px; align-items: flex-start; }
.res .lab { line-height: 52px; }
.opts { display: flex; gap: 32px; padding-left: 16px; }
.opt { display: flex; flex-direction: column; align-items: center; color: #444; }
.box { width: 85px; height: 51px; border: 3px solid #505050; display: flex; flex-direction: column; align-items: center; justify-content: space-between; font: bold 13px/16px "Noto Sans", sans-serif; padding: 0 0 1px 4px; }
.box .n { font-size: 11px; line-height: 20px; }
.cap { line-height: 22px; font-size: 11px; margin-top: 2px; }
.sel .box { border-color: #259ad8; color: #1d55a5; }
.sel .cap { font-weight: 700; }
select {
  appearance: none; height: 24px; border: 1px solid #a2a2a2; border-radius: 0; padding: 0 8px 1px 7px; font-size: 11px; color: #111;
  background: url("data:image/svg+xml,%3Csvg xmlns='http://www.w3.org/2000/svg' width='8' height='6'%3E%3Cpath d='M0 0h8L4 5z' fill='%23111'/%3E%3C/svg%3E") right 11px center no-repeat, linear-gradient(#fafafa, #dcdcdc);
}
.fmt { margin-top: 47px; }
.wide { width: 205px; }
.slim { width: 75px; }
.lab2 { width: 99px; padding: 3px 0 0 20px; color: #444; font-weight: 700; font-size: 10px; }
.qual { margin-top: 24px; }
.qual .lab { padding-bottom: 4px; }
.house { display: block; height: 14px; width: 218px; }
.house.faint { width: 195px; margin: 0 23px 0 7px; }
.house::-webkit-slider-runnable-track { height: 6px; border-radius: 3px; background: #bbb; border: 1px solid #909090; border-top-color: #666; }
.house::-webkit-slider-thumb { appearance: none; width: 12px; height: 15px; margin-top: -5px; background: url("data:image/svg+xml,%3Csvg xmlns='http://www.w3.org/2000/svg' width='12' height='15'%3E%3Cpath d='M1 5.500L6 1l5 4.500V14H1z' fill='%23fff' stroke='%23444' stroke-width='1.300'/%3E%3C/svg%3E"); }
.faint::-webkit-slider-runnable-track { background: #d6d6d6; border-color: #c4c4c4; }
.faint::-webkit-slider-thumb { background: url("data:image/svg+xml,%3Csvg xmlns='http://www.w3.org/2000/svg' width='12' height='15'%3E%3Cpath d='M1 5.500L6 1l5 4.500V14H1z' fill='%23f6f6f6' stroke='%23aaa' stroke-width='1.300'/%3E%3C/svg%3E"); }
.need { font-size: 11px; padding-top: 2px; }
.need b { color: #444; }
.check { margin-top: 41px; padding-left: 101px; gap: 10px; font-size: 11px; }
.check input { appearance: none; width: 14px; height: 14px; border: 1px solid #777; background: url("data:image/svg+xml,%3Csvg xmlns='http://www.w3.org/2000/svg' viewBox='0 0 12 12'%3E%3Cpath d='M2 6l3 4 5-9' fill='none' stroke='%23222' stroke-width='2.200'/%3E%3C/svg%3E") #aaa; }

.rightcol { flex: 1; padding: 26px 10px 0 36px; }
.rightcol h2 { font-size: 11px; }
.preview { width: 218px; height: 120px; margin: 18px 0 13px; background: #2351a8; border: solid #050a18; border-width: 1px 4px 2px 3px; padding: 24px 0 0 4px; color: #dfe3fb; font-weight: 900; font-size: 17px; line-height: 22px; white-space: nowrap; font-feature-settings: normal; }
.preview .in { padding-left: 28px; }
.rightcol .rec { margin-top: 18px; line-height: 17px; font-size: 12px; }
dl { display: grid; grid-template-columns: 105px 1fr; line-height: 17px; font-size: 11px; }
.two { line-height: 13px; padding: 2px 0 4px 2px; }

.dfoot { background: #a9a9a9; padding: 16px 39px 17px 30px; display: flex; flex-direction: column; gap: 16px; }
.frow { display: flex; align-items: center; height: 21px; }
.frow .lab { width: 96px; }
.frow select, .frow input { width: 198px; height: 21px; }
.frow select { border: 1px solid #ddd; }
.frow input { border: 2px solid #777; border-width: 2px 1px 1px 2px; outline: 1px solid #e8e8e8; outline-offset: -1px; background: #fff; padding: 0 3px 5px; font-size: 11px; line-height: 13px; color: #444; }
.fhelp { margin-left: 17px; margin-bottom: 4px; color: #666; }
.fhelp svg { width: 16px; height: 16px; }
.btn { width: 85px; height: 20px; border: 1px solid #444; background: linear-gradient(#fafafa, #dcdcdc); font-size: 11px; line-height: 16px; }
.browse { width: 70px; margin: 0 15px 0 16px; }
.burn { margin: 0 15px 0 auto; color: #888; }
.status { color: #333; font-size: 10px; width: 61px; }
.bad { color: #2450c8; font-size: 11px; }

.taskbar { height: 61px; flex: none; display: flex; align-items: center; color: #fff; background: linear-gradient(90deg, #172f39, #12283a 15%, #152f35 35%, #17302f 50%, #14293a 70%, #242625 77%, #122a36 82%, #142b36); }
.pad { flex: 1; }
.dock { display: flex; }
.dock button { width: 49px; height: 50px; margin: 0 3px; display: grid; place-items: center; }
.dock svg { width: 30px; height: 30px; }
.dock .run { position: relative; }
.dock .run svg { width: 28px; height: 28px; }
.run::after { content: ""; position: absolute; bottom: 1px; left: 50%; width: 8px; height: 4px; margin-left: -4px; border-radius: 2px; background: #9aa3a8; }
.cur { background: #24363f; border-radius: 4px; box-shadow: inset 0 0 0 1px #2d4049; }
.cur::after { width: 20px; margin-left: -10px; background: #5fc0f0; }
.pr { width: 28px; height: 27px; border: 2px solid #d36be8; background: #2a0634; color: #dd80f2; font: bold 15px/22px "Noto Sans", sans-serif; }
.tray { flex: 1; display: flex; align-items: center; justify-content: flex-end; }
.tray svg { height: 24px; }
.w30 { width: 30px; }
.w40 { width: 40px; }
.w20 { width: 20px; }
.ime { width: 40px; text-align: center; font: 24px/24px "Open Sans", sans-serif; }
.clock { width: 85px; display: flex; flex-direction: column; align-items: flex-end; font: 14px/20px "Noto Sans", sans-serif; }
.badge { width: 20px; height: 20px; margin: 0 25px 0 10px; border-radius: 50%; background: #4cc2ff; color: #123; text-align: center; font: 12px/20px "Noto Sans", sans-serif; }
</style>
